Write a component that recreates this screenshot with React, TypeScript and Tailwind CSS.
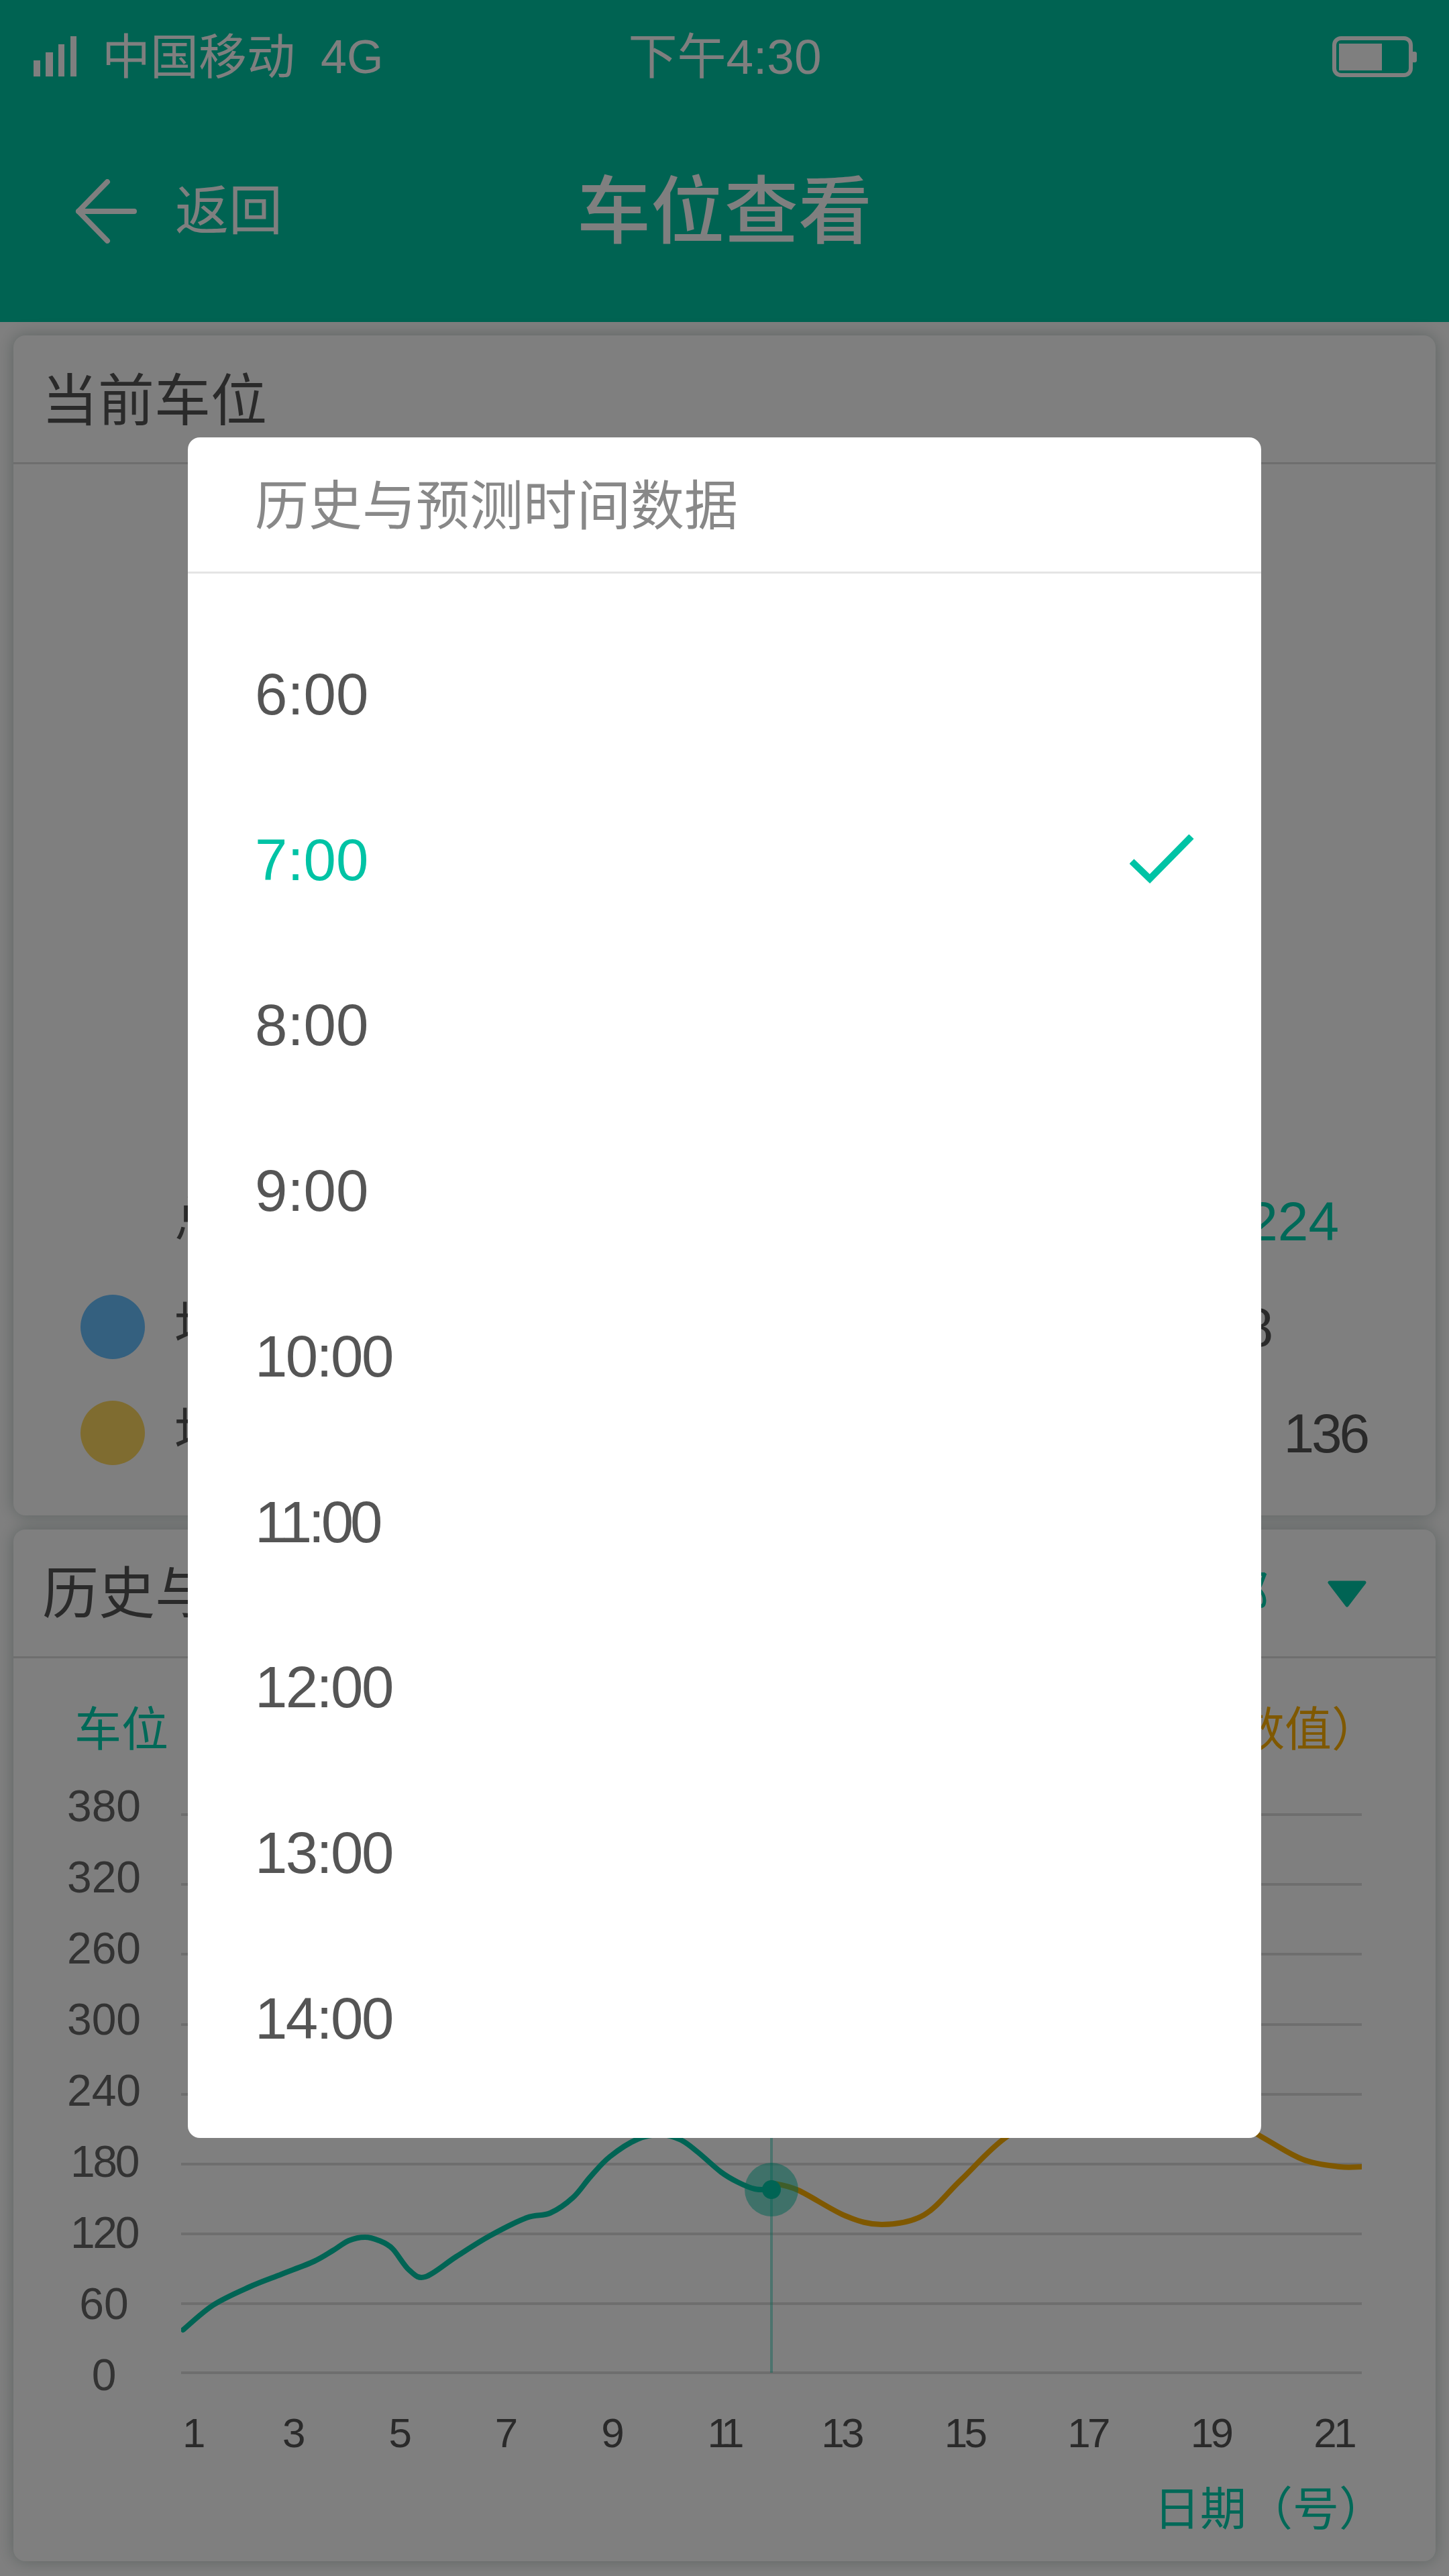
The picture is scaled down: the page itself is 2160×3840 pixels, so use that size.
const green: [number, number][] = [
  [273, 3473], [318, 3436], [372, 3409], [420, 3390], [468, 3371], [496, 3355], [520, 3340], [544, 3335], [565, 3340], [585, 3352], [610, 3384], [634, 3394], [680, 3364], [730, 3333], [785, 3306], [820, 3299], [854, 3276], [880, 3245], [909, 3215], [950, 3189], [985, 3182], [1015, 3190], [1040, 3208], [1075, 3238], [1100, 3253], [1125, 3263], [1150, 3264],
];
const orange: [number, number][] = [
  [1150, 3254], [1190, 3265], [1260, 3303], [1315, 3316], [1377, 3302], [1433, 3249], [1501, 3185], [1600, 3130], [1750, 3110], [1880, 3185], [1942, 3219], [1997, 3230], [2030, 3230],
];

function smooth(pts: [number, number][]) {
  let d = `M${pts[0][0]} ${pts[0][1]}`;
  for (let i = 0; i < pts.length - 1; i++) {
    const p0 = pts[Math.max(i - 1, 0)];
    const p1 = pts[i];
    const p2 = pts[i + 1];
    const p3 = pts[Math.min(i + 2, pts.length - 1)];
    d += ` C${p1[0] + (p2[0] - p0[0]) / 6} ${p1[1] + (p2[1] - p0[1]) / 6} ${p2[0] - (p3[0] - p1[0]) / 6} ${p2[1] - (p3[1] - p1[1]) / 6} ${p2[0]} ${p2[1]}`;
  }
  return d;
}

// The digit 1 is narrower in the reference's typeface; tighten the whole number to keep its width.
function Num({ value }: { value: string }) {
  const ones = value.split("1").length - 1;
  return <span style={{ letterSpacing: `${(-0.15 * ones) / value.length}em` }}>{value}</span>;
}

const yLabels = ["380", "320", "260", "300", "240", "180", "120", "60", "0"];
const xLabels = ["1", "3", "5", "7", "9", "11", "13", "15", "17", "19", "21"];
const gridY = [2705, 2809, 2913, 3018, 3122, 3226, 3330, 3434, 3537];
const times = ["6:00", "7:00", "8:00", "9:00", "10:00", "11:00", "12:00", "13:00", "14:00"];

function LegendRow({ dot, label, value, valueClass }: { dot: string; label: string; value: string; valueClass: string }) {
  return (
    <div className="flex items-center h-[100px] pl-[100px]">
      <span className={`w-[96px] h-[96px] rounded-full ${dot}`} />
      <span className="ml-[44px] text-[76px] text-[#555]">{label}</span>
      <span className={`ml-auto text-[82px] text-[#555] ${valueClass}`}>
        <Num value={value} />
      </span>
    </div>
  );
}

export default function App() {
  return (
    <div className="relative w-[2160px] h-[3840px] overflow-hidden bg-white font-['Liberation_Sans','Noto_Sans_CJK_SC',sans-serif]">
      <header className="h-[480px] bg-[#00c6a4] text-white">
        <div className="grid grid-cols-3 items-center h-[170px] pl-[49px] pr-[48px] text-[72px]">
          <div className="flex items-center whitespace-nowrap">
            <svg width="66" height="62" viewBox="0 0 66 62" fill="white">
              <rect x="1" y="36" width="10" height="24" />
              <rect x="19" y="24" width="11" height="36" />
              <rect x="38" y="12" width="9" height="48" />
              <rect x="56" y="0" width="9" height="60" />
            </svg>
            <span className="ml-[37px]">中国移动</span>
            <span className="ml-[38px] text-[70px]">4G</span>
          </div>
          <div className="text-center text-[73px] whitespace-nowrap">下午4:30</div>
          <div className="flex justify-end">
            <svg width="126" height="62" viewBox="0 0 126 62">
              <rect x="3" y="3" width="114" height="55" rx="10" fill="none" stroke="white" strokeWidth="6" />
              <rect x="10" y="11" width="64" height="40" fill="white" />
              <path d="M120 23h3a3 3 0 0 1 3 3v10a3 3 0 0 1-3 3h-3z" fill="white" />
            </svg>
          </div>
        </div>
        <div className="grid grid-cols-3 items-center h-[290px]">
          <div className="flex items-center pl-[112px]">
            <svg width="92" height="96" viewBox="0 0 92 96" fill="none" stroke="white" strokeWidth="8" strokeLinecap="round" strokeLinejoin="round">
              <path d="M48 4 L5 48 L48 92" />
              <path d="M5 48 H88" />
            </svg>
            <span className="ml-[57px] text-[80px]">返回</span>
          </div>
          <div className="text-center text-[110px] font-medium whitespace-nowrap">车位查看</div>
        </div>
      </header>

      <main className="flex flex-col gap-[21px] px-[20px] pt-[20px]">
        <section className="h-[1759px] rounded-[18px] bg-white shadow-[0_0_24px_rgba(0,50,40,0.28)]">
          <div className="flex items-center h-[192px] pl-[42px] pt-[6px] border-b-[3px] border-[#ddd] text-[84px] text-[#555]">当前车位</div>
          <div className="pt-[1078px]">
            <div className="flex items-center h-[100px] pl-[240px] pr-[144px]">
              <span className="text-[76px] text-[#555]">总车位</span>
              <span className="ml-auto text-[82px] text-[#00d2b0]">224</span>
            </div>
            <div className="flex flex-col gap-[58px] mt-[58px]">
              <LegendRow dot="bg-[#68c0ff]" label="地上车位" value="88" valueClass="mr-[242px]" />
              <LegendRow dot="bg-[#ffd860]" label="地下车位" value="136" valueClass="mr-[102px]" />
            </div>
          </div>
        </section>

        <section className="h-[1538px] rounded-[18px] bg-white shadow-[0_0_24px_rgba(0,50,40,0.28)]">
          <div className="flex items-center justify-between h-[192px] pl-[43px] pt-[2px] pr-[102px] border-b-[3px] border-[#ddd]">
            <span className="text-[84px] text-[#555]">历史与预测时间数据</span>
            <div className="flex items-center gap-[86px]">
              <span className="text-[72px] text-[#00d2b0]">全部</span>
              <svg width="60" height="40" viewBox="0 0 60 40">
                <path d="M4 3 H56 L30 37 Z" fill="#00c8a8" stroke="#00c8a8" strokeWidth="5" strokeLinejoin="round" />
              </svg>
            </div>
          </div>
          <div className="flex items-center justify-between h-[100px] mt-[57px] pl-[91px] pr-[85px] text-[70px]">
            <span className="text-[#00d2b0]">车位</span>
            <span className="text-[#ffb000]">（预测数值）</span>
          </div>
          <div className="flex items-start mt-[10px] pl-[20px]">
            <div className="flex flex-col w-[230px] text-[66px] text-center text-[#666]">
              {yLabels.map((l, i) => (
                <span key={i} className="h-[106px] leading-[106px]">
                  <Num value={l} />
                </span>
              ))}
            </div>
            <svg className="mt-[61px]" width="1760" height="850" viewBox="270 2700 1760 850" fill="none">
              {gridY.map((y) => (
                <line key={y} x1="270" x2="2030" y1={y} y2={y} stroke="#ddd" strokeWidth="4" />
              ))}
              <line x1="1150" x2="1150" y1="2700" y2="3537" stroke="#00c8a8" strokeOpacity="0.4" strokeWidth="4" />
              <path d={smooth(orange)} stroke="#ffb000" strokeWidth="8" strokeLinecap="round" />
              <path d={smooth(green)} stroke="#00c8a8" strokeWidth="8" strokeLinecap="round" />
              <circle cx="1150" cy="3264" r="40" fill="#00c8a8" fillOpacity="0.5" />
              <circle cx="1150" cy="3264" r="14" fill="#00c8a8" />
            </svg>
          </div>
          <div className="flex justify-between items-center h-[66px] ml-[252px] mr-[122px] text-[62px] text-[#555]">
            {xLabels.map((l) => (
              <span key={l}>
                <Num value={l} />
              </span>
            ))}
          </div>
          <div className="h-[100px] leading-[100px] mt-[33px] pr-[75px] text-right text-[69px] text-[#00d2b0]">日期（号）</div>
        </section>
      </main>

      <div className="absolute inset-0 flex items-start justify-center pt-[652px] bg-black/50">
        <div className="w-[1600px] h-[2535px] rounded-[18px] bg-white">
          <div className="flex items-center h-[203px] pl-[100px] pt-[6px] border-b-[3px] border-[#e5e5e5] text-[80px] text-[#888]">历史与预测时间数据</div>
          <div className="flex flex-col pt-[57px]">
            {times.map((t) => (
              <div key={t} className={`flex items-center justify-between h-[246.7px] pl-[100px] pr-[100px] text-[87px] ${t === "7:00" ? "text-[#00c3a5]" : "text-[#555]"}`}>
                <Num value={t} />
                {t === "7:00" && (
                  <svg width="96" height="76" viewBox="0 0 96 76" fill="none" stroke="#00c3a5" strokeWidth="10">
                    <path d="M3 40 L30 66 L92 3" />
                  </svg>
                )}
              </div>
            ))}
          </div>
        </div>
      </div>
    </div>
  );
}
